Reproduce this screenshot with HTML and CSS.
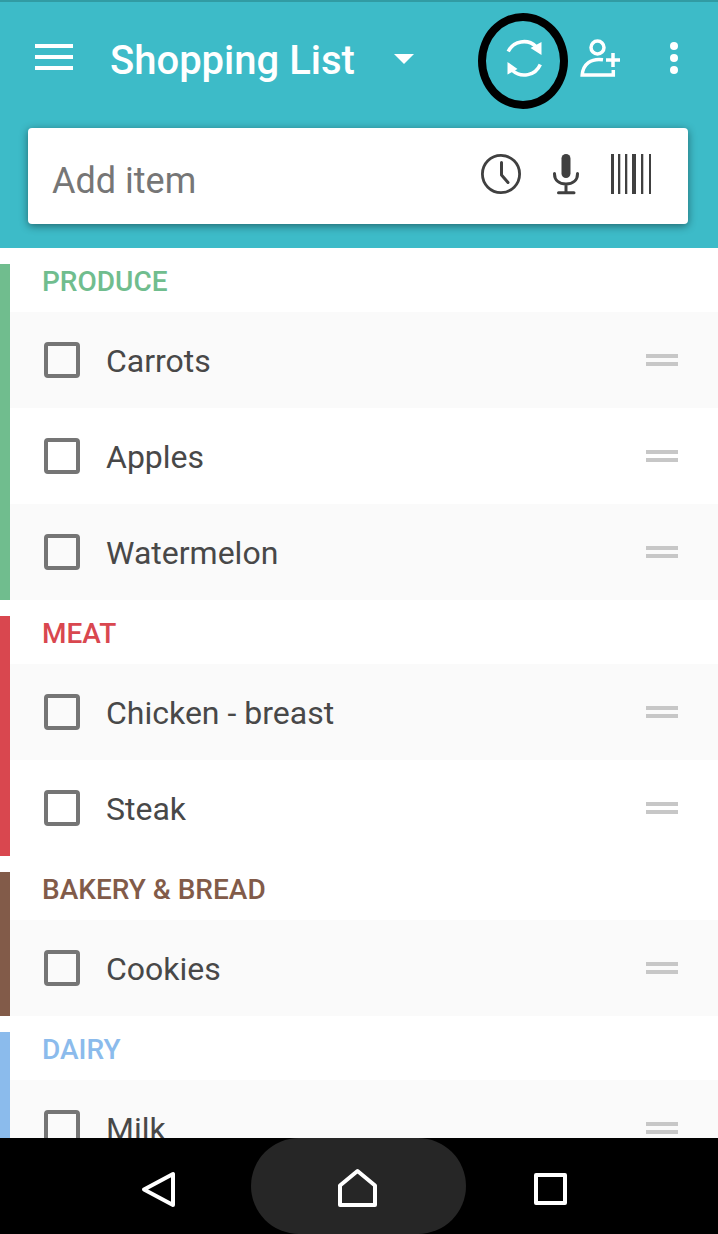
FILE: index.html
```html
<!DOCTYPE html>
<html lang="en">
<head>
  <meta charset="UTF-8" />
  <meta name="viewport" content="width=device-width, initial-scale=1.0"/>
  <title>Shopping List</title>
  <link rel="stylesheet" href="styles.css">
</head>
<body>

  <!-- Header -->
  <header class="header">
    <div class="toolbar">
      <button class="menu-btn" aria-label="Menu">
        <svg width="40" height="40" viewBox="0 0 40 40" fill="#fff">
          <path d="M1 6h38v4H1zM1 17h38v4H1zM1 28h38v4H1z"/>
        </svg>
      </button>
      <div class="list-picker">
        <select aria-label="Current list">
          <option>Shopping List</option>
        </select>
        <svg class="arrow" width="20" height="10" viewBox="0 0 20 10" fill="#fff"><path d="M0 0h20L10 10z"/></svg>
      </div>
      <div class="actions">
        <button class="action sync" aria-label="Sync">
          <svg width="40" height="40" viewBox="0 0 40 40">
            <path d="M4.200 13.500A17.500 17.500 0 0 1 32 8.500M36.300 26.500A17.500 17.500 0 0 1 8.500 32.500" fill="none" stroke="#fff" stroke-width="3.500"/>
            <path d="M37.500 4V17L26.500 10zM3.500 24L13.500 31L3.500 36.500z" fill="#fff"/>
          </svg>
          <span class="ring"></span>
        </button>
        <button class="action" aria-label="Share list">
          <svg width="40" height="40" viewBox="0 0 40 40" fill="none" stroke="#fff" stroke-width="3.500">
            <circle cx="17.500" cy="9.500" r="6.500"/>
            <path d="M23 21.700C11 20 3 26 2.200 37H33.300V32M33 15V29M26 22H40"/>
          </svg>
        </button>
        <button class="action" aria-label="More options">
          <svg width="40" height="40" viewBox="0 0 40 40" fill="#fff">
            <circle cx="20" cy="8" r="4"/>
            <circle cx="20" cy="20" r="4"/>
            <circle cx="20" cy="32" r="4"/>
          </svg>
        </button>
      </div>
    </div>

    <form class="add-box">
      <input type="text" placeholder="Add item" aria-label="Add item">
      <button type="button" aria-label="Recent items">
        <svg width="40" height="40" viewBox="0 0 40 40" fill="none" stroke="#404040" stroke-linecap="round" stroke-linejoin="round">
          <circle cx="20" cy="20" r="18.600" stroke-width="2.800"/>
          <path d="M20.500 8.500V21L27 28.500" stroke-width="3"/>
        </svg>
      </button>
      <button type="button" aria-label="Voice input">
        <svg width="40" height="42" viewBox="0 0 40 42" fill="none" stroke="#404040" stroke-width="3" stroke-linecap="round">
          <rect x="15.500" y="1" width="9" height="24" rx="4.500" fill="#404040" stroke="none"/>
          <path d="M8.500 20.500V21C8.500 27.500 13.500 31 20 31S31.500 27.500 31.500 21V20.500M20 31V39M12.500 39.700H28"/>
        </svg>
      </button>
      <button type="button" aria-label="Scan barcode">
        <svg width="40" height="40" viewBox="0 0 40 40" fill="#404040">
          <path d="M0 0h3v40H0zM7 0h2.300v40H7zM14 0h2.300v40H14zM21 0h4v40h-4zM30 0h2.300v40H30zM38 0h2v40h-2z"/>
        </svg>
      </button>
    </form>
  </header>

  <!-- List -->
  <main class="list">
    <section class="group produce">
      <h2>PRODUCE</h2>
      <ul>
        <li><label><input type="checkbox"><span>Carrots</span></label><span class="handle"></span></li>
        <li><label><input type="checkbox"><span>Apples</span></label><span class="handle"></span></li>
        <li><label><input type="checkbox"><span>Watermelon</span></label><span class="handle"></span></li>
      </ul>
    </section>

    <section class="group meat">
      <h2>MEAT</h2>
      <ul>
        <li><label><input type="checkbox"><span>Chicken - breast</span></label><span class="handle"></span></li>
        <li><label><input type="checkbox"><span>Steak</span></label><span class="handle"></span></li>
      </ul>
    </section>

    <section class="group bakery">
      <h2>BAKERY &amp; BREAD</h2>
      <ul>
        <li><label><input type="checkbox"><span>Cookies</span></label><span class="handle"></span></li>
      </ul>
    </section>

    <section class="group dairy">
      <h2>DAIRY</h2>
      <ul>
        <li><label><input type="checkbox"><span>Milk</span></label><span class="handle"></span></li>
      </ul>
    </section>
  </main>

  <!-- System navigation -->
  <nav class="nav-bar">
    <button class="back" aria-label="Back">
      <svg width="40" height="40" viewBox="0 0 40 40" fill="none" stroke="#fff" stroke-width="4" stroke-linejoin="round">
        <path d="M34 5V36L5 20.500z"/>
      </svg>
    </button>
    <button class="home" aria-label="Home">
      <svg width="40" height="40" viewBox="0 0 40 40" fill="none" stroke="#fff" stroke-width="4" stroke-linejoin="round">
        <path d="M2 17.500L19.500 3L37 17.500V37H2z"/>
      </svg>
    </button>
    <button class="recent" aria-label="Recent apps">
      <svg width="40" height="40" viewBox="0 0 40 40" fill="none" stroke="#fff" stroke-width="4" stroke-linejoin="round">
        <path d="M6 6H35V34H6z"/>
      </svg>
    </button>
  </nav>

</body>
</html>
```
FILE: styles.css
```css
/* Base Styles */
* {
  box-sizing: border-box;
}
body {
  font-family: Roboto, sans-serif;
  margin: 0;
  height: 100vh;
  display: flex;
  flex-direction: column;
  background-color: #fff;
  color: #484848;
}
button {
  display: flex;
  align-items: center;
  justify-content: center;
  padding: 0;
  border: none;
  background: none;
  cursor: pointer;
}
svg {
  display: block;
  flex-shrink: 0;
}

/* Header */
.header {
  flex-shrink: 0;
  background-color: #3dbbc8;
  border-top: 2px solid #319ba3;
  padding-bottom: 24px;
}
.toolbar {
  display: flex;
  align-items: center;
  height: 112px;
  margin-bottom: 14px;
  padding: 0 8px 0 34px;
}
.list-picker {
  position: relative;
  margin-left: 36px;
}
.list-picker select {
  appearance: none;
  border: none;
  background: none;
  padding: 6px 59px 0 0;
  font-family: inherit;
  font-size: 40px;
  font-weight: 500;
  line-height: 48px;
  color: #fff;
}
.arrow {
  position: absolute;
  right: 0;
  top: 23px;
  pointer-events: none;
}
.actions {
  display: flex;
  margin-left: auto;
}
.action {
  position: relative;
  width: 76px;
  height: 96px;
}
.action:last-child {
  width: 72px;
}
.ring {
  position: absolute;
  top: 3px;
  left: -8px;
  width: 90px;
  height: 96px;
  border: 8px solid #000;
  border-radius: 50%;
}

/* Add Item */
.add-box {
  display: flex;
  align-items: center;
  height: 96px;
  margin: 0 30px 0 28px;
  padding: 0 25px 4px 24px;
  background: #fff;
  border-radius: 4px;
  box-shadow: 0 2px 8px rgba(0, 0, 0, 0.45);
}
.add-box input {
  flex: 1;
  min-width: 0;
  padding: 14px 0 0;
  border: none;
  outline: none;
  background: none;
  font-family: inherit;
  font-size: 36px;
  line-height: 44px;
}
.add-box input::placeholder {
  color: #767676;
}
.add-box button {
  width: 65px;
  height: 72px;
}

/* List */
.list {
  flex: 1;
  min-height: 0;
  overflow-y: auto;
  scrollbar-width: none;
}
.group {
  margin-top: 16px;
  border-left: 10px solid;
}
.group h2 {
  margin: 0;
  padding: 0 32px 12px;
  font-size: 28px;
  font-weight: 500;
  line-height: 36px;
}
.group ul {
  list-style: none;
  margin: 0;
  padding: 0;
}
.group li {
  display: flex;
  align-items: center;
  height: 96px;
  padding: 0 40px 0 34px;
  color: #484848;
}
.group li:nth-child(odd) {
  background: #fafafa;
}
.group label {
  flex: 1;
  display: flex;
  align-items: center;
  font-size: 32px;
  line-height: 40px;
}
.group label span {
  padding-top: 2px;
}
.group input {
  appearance: none;
  width: 36px;
  height: 36px;
  margin: 0 26px 0 0;
  border: 4px solid #757575;
  border-radius: 4px;
}
.group input:checked {
  background: #757575;
}
.handle {
  width: 32px;
  height: 12px;
  border: solid #c7c7c7;
  border-width: 4px 0;
}

/* Category Colors */
.produce {
  border-color: #70bd8e;
  color: #70bd8e;
}
.meat {
  border-color: #d9474f;
  color: #d9474f;
}
.bakery {
  border-color: #825b49;
  color: #825b49;
}
.dairy {
  border-color: #8bbbec;
  color: #8bbbec;
}

/* Navigation Bar */
.nav-bar {
  flex-shrink: 0;
  display: grid;
  grid-template-columns: 1fr 215px 1fr;
  height: 96px;
  padding-right: 2px;
  background: #000;
}
.back {
  justify-content: flex-end;
  padding: 6px 72px 0 0;
}
.home {
  background: #262626;
  border-radius: 50px;
  padding-top: 4px;
}
.recent {
  justify-content: flex-start;
  padding: 6px 0 0 64px;
}
```
